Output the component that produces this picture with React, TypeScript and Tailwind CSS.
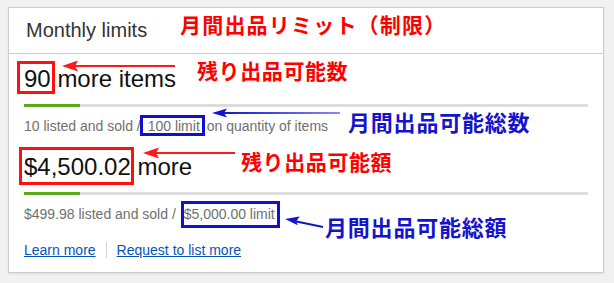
import React from "react";

const sans = { fontFamily: '"Liberation Sans", Arial, sans-serif' };

// boxed text marker drawn over the original text
const Marked: React.FC<{ color: string; box: string; className?: string; children: React.ReactNode }> = ({
  color,
  box,
  className = "",
  children,
}) => (
  <span className={`relative ${className}`}>
    {children}
    <span className={`pointer-events-none absolute border-[3px] ${color} ${box}`} />
  </span>
);

const Bar: React.FC<{ pct: number; className?: string }> = ({ pct, className = "" }) => (
  <div className={`h-[3px] w-full bg-[#dddddd] ${className}`}>
    <div className="h-full bg-[#5ba71b]" style={{ width: `${pct}%` }} />
  </div>
);

const Note: React.FC<{ className: string; children: React.ReactNode }> = ({ className, children }) => (
  <div
    className={`absolute whitespace-nowrap font-bold leading-none ${className}`}
    style={{ fontFamily: '"Noto Sans CJK JP", sans-serif' }}
  >
    {children}
  </div>
);

export default function App() {
  return (
    <div className="relative h-[283px] w-[614px] overflow-hidden bg-[#f1f1f1] pl-[8px] pt-[7px]" style={sans}>
      <div className="w-[596px] border border-[#cccccc] bg-white shadow-[0_1px_2px_rgba(0,0,0,0.08)]">
        <div className="border-b border-[#cccccc] pb-[11px] pl-[17px] pt-[10px] text-[20px] leading-[24px] text-[#333333]">
          Monthly limits
        </div>

        <div className="px-[15px] pb-[12px] pt-[11px]">
          <div className="text-[24px] leading-[28px] text-[#111111]">
            <Marked color="border-[#ff1010]" box="-left-[7px] -right-[4px] -top-[4px] -bottom-[2px]">
              90
            </Marked>{" "}
            more items
          </div>
          <Bar pct={10} className="mt-[11px]" />
          <div className="mt-[9px] text-[14px] leading-[20px] text-[#707070]">
            10 listed and sold /{" "}
            <Marked
              color="border-[#1010d0]"
              box="-left-[8px] -right-[5px] -top-[3px] -bottom-[2px]"
              className="ml-[3px] mr-[3px]"
            >
              100 limit
            </Marked>{" "}
            on quantity of items
          </div>

          <div className="mt-[17px] text-[24px] leading-[28px] text-[#111111]">
            <Marked color="border-[#ff1010]" box="-left-[5px] -right-[3px] -top-[6px] -bottom-[5px]">
              $4,500.02
            </Marked>{" "}
            more
          </div>
          <Bar pct={10} className="mt-[11px]" />
          <div className="mt-[9px] text-[14px] leading-[20px] text-[#707070]">
            $499.98 listed and sold /{" "}
            <Marked
              color="border-[#1010d0]"
              box="-left-[3px] -right-[5px] -top-[5px] -bottom-[6px]"
              className="ml-[4px]"
            >
              $5,000.00 limit
            </Marked>
          </div>

          <div className="mt-[16px] flex items-center text-[14px] leading-[20px] text-[#0654ba]">
            <a href="#" className="underline">
              Learn more
            </a>
            <span className="mx-[10px] h-[16px] border-l border-[#d5d5d5]" />
            <a href="#" className="underline">
              Request to list more
            </a>
          </div>
        </div>
      </div>

      {/* annotations */}
      <Note className="left-[180px] top-[14px] text-[21px] tracking-[1.2px] text-[#ff0000]">月間出品リミット（制限）</Note>
      <Note className="left-[197px] top-[60px] text-[21px] tracking-[0.6px] text-[#ff0000]">残り出品可能数</Note>
      <Note className="left-[241px] top-[151px] text-[21px] tracking-[0.6px] text-[#ff0000]">残り出品可能額</Note>
      <Note className="left-[348px] top-[110px] text-[22px] tracking-[0.8px] text-[#1414cc]">月間出品可能総数</Note>
      <Note className="left-[325px] top-[215px] text-[22px] tracking-[0.8px] text-[#1414cc]">月間出品可能総額</Note>

      <svg className="pointer-events-none absolute left-0 top-0" width="614" height="283" viewBox="0 0 614 283">
        <defs>
          <linearGradient id="blueFade" gradientUnits="userSpaceOnUse" x1="222" y1="113" x2="340" y2="113">
            <stop offset="0" stopColor="#1414cc" />
            <stop offset="1" stopColor="#8a8af5" />
          </linearGradient>
        </defs>
        {/* red arrow -> 90 */}
        <line x1="72" y1="66" x2="175" y2="66" stroke="#ff1a1a" strokeWidth="2" />
        <polygon points="62,66 78,60.5 75,66 78,71.5" fill="#ff1a1a" />
        {/* red arrow -> $4,500.02 */}
        <line x1="153" y1="153" x2="235" y2="153" stroke="#ff1a1a" strokeWidth="2" />
        <polygon points="143,153 159,147.5 156,153 159,158.5" fill="#ff1a1a" />
        {/* blue arrow -> 100 limit */}
        <line x1="222" y1="113" x2="340" y2="113" stroke="url(#blueFade)" strokeWidth="2" />
        <polygon points="212,113 227,108.5 224,113 227,117.5" fill="#1414cc" />
        {/* blue arrow -> $5,000.00 limit */}
        <line x1="294" y1="221" x2="323" y2="227" stroke="#1414cc" strokeWidth="2" />
        <polygon points="285,219 299.7,216.4 296.2,221.3 297.8,225.2" fill="#1414cc" />
      </svg>
    </div>
  );
}
